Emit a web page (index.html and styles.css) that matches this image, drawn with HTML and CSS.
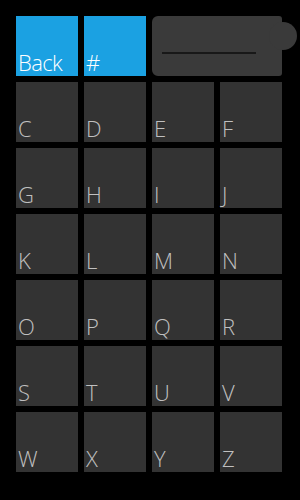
FILE: index.html
```html
<!DOCTYPE html>
<html lang="en">
<head>
  <meta charset="UTF-8" />
  <meta name="viewport" content="width=device-width, initial-scale=1.0"/>
  <title>Jump List</title>
  <link rel="stylesheet" href="styles.css">
</head>
<body>
  <!-- letter jump grid -->
  <div class="grid">
    <div class="tile accent">Back</div>
    <div class="tile accent">#</div>
    <div class="blob">
      <span class="blob-line"></span>
      <span class="blob-dot"></span>
    </div>

    <div class="tile">C</div>
    <div class="tile">D</div>
    <div class="tile">E</div>
    <div class="tile">F</div>

    <div class="tile">G</div>
    <div class="tile">H</div>
    <div class="tile">I</div>
    <div class="tile">J</div>

    <div class="tile">K</div>
    <div class="tile">L</div>
    <div class="tile">M</div>
    <div class="tile">N</div>

    <div class="tile">O</div>
    <div class="tile">P</div>
    <div class="tile">Q</div>
    <div class="tile">R</div>

    <div class="tile">S</div>
    <div class="tile">T</div>
    <div class="tile">U</div>
    <div class="tile">V</div>

    <div class="tile">W</div>
    <div class="tile">X</div>
    <div class="tile">Y</div>
    <div class="tile">Z</div>
  </div>
</body>
</html>
```

FILE: styles.css
```css
body {
  margin: 0;
  padding: 16px 0 0 16px;
  background-color: #000000;
  font-family: "Open Sans", "Noto Sans", sans-serif;
}

.grid {
  display: grid;
  grid-template-columns: repeat(4, 62px);
  grid-auto-rows: 60px;
  gap: 6px;
}

.tile {
  background-color: #333333;
  color: #c0c0c0;
  font-size: 22px;
  font-weight: 300;
  letter-spacing: -0.6px;
  line-height: 1;
  display: flex;
  align-items: flex-end;
  padding: 0 0 3px 2px;
  box-sizing: border-box;
}

.tile.accent {
  background-color: #1ba1e2;
  color: #ffffff;
}

.blob {
  grid-column: span 2;
  background-color: #3a3a3a;
  border-radius: 6px 3px 3px 6px;
  position: relative;
}

.blob-line {
  position: absolute;
  left: 10px;
  right: 26px;
  top: 36px;
  height: 2px;
  background-color: #181818;
}

.blob-dot {
  position: absolute;
  right: -15px;
  top: 6px;
  width: 28px;
  height: 28px;
  border-radius: 50%;
  background-color: #3a3a3a;
}
```
